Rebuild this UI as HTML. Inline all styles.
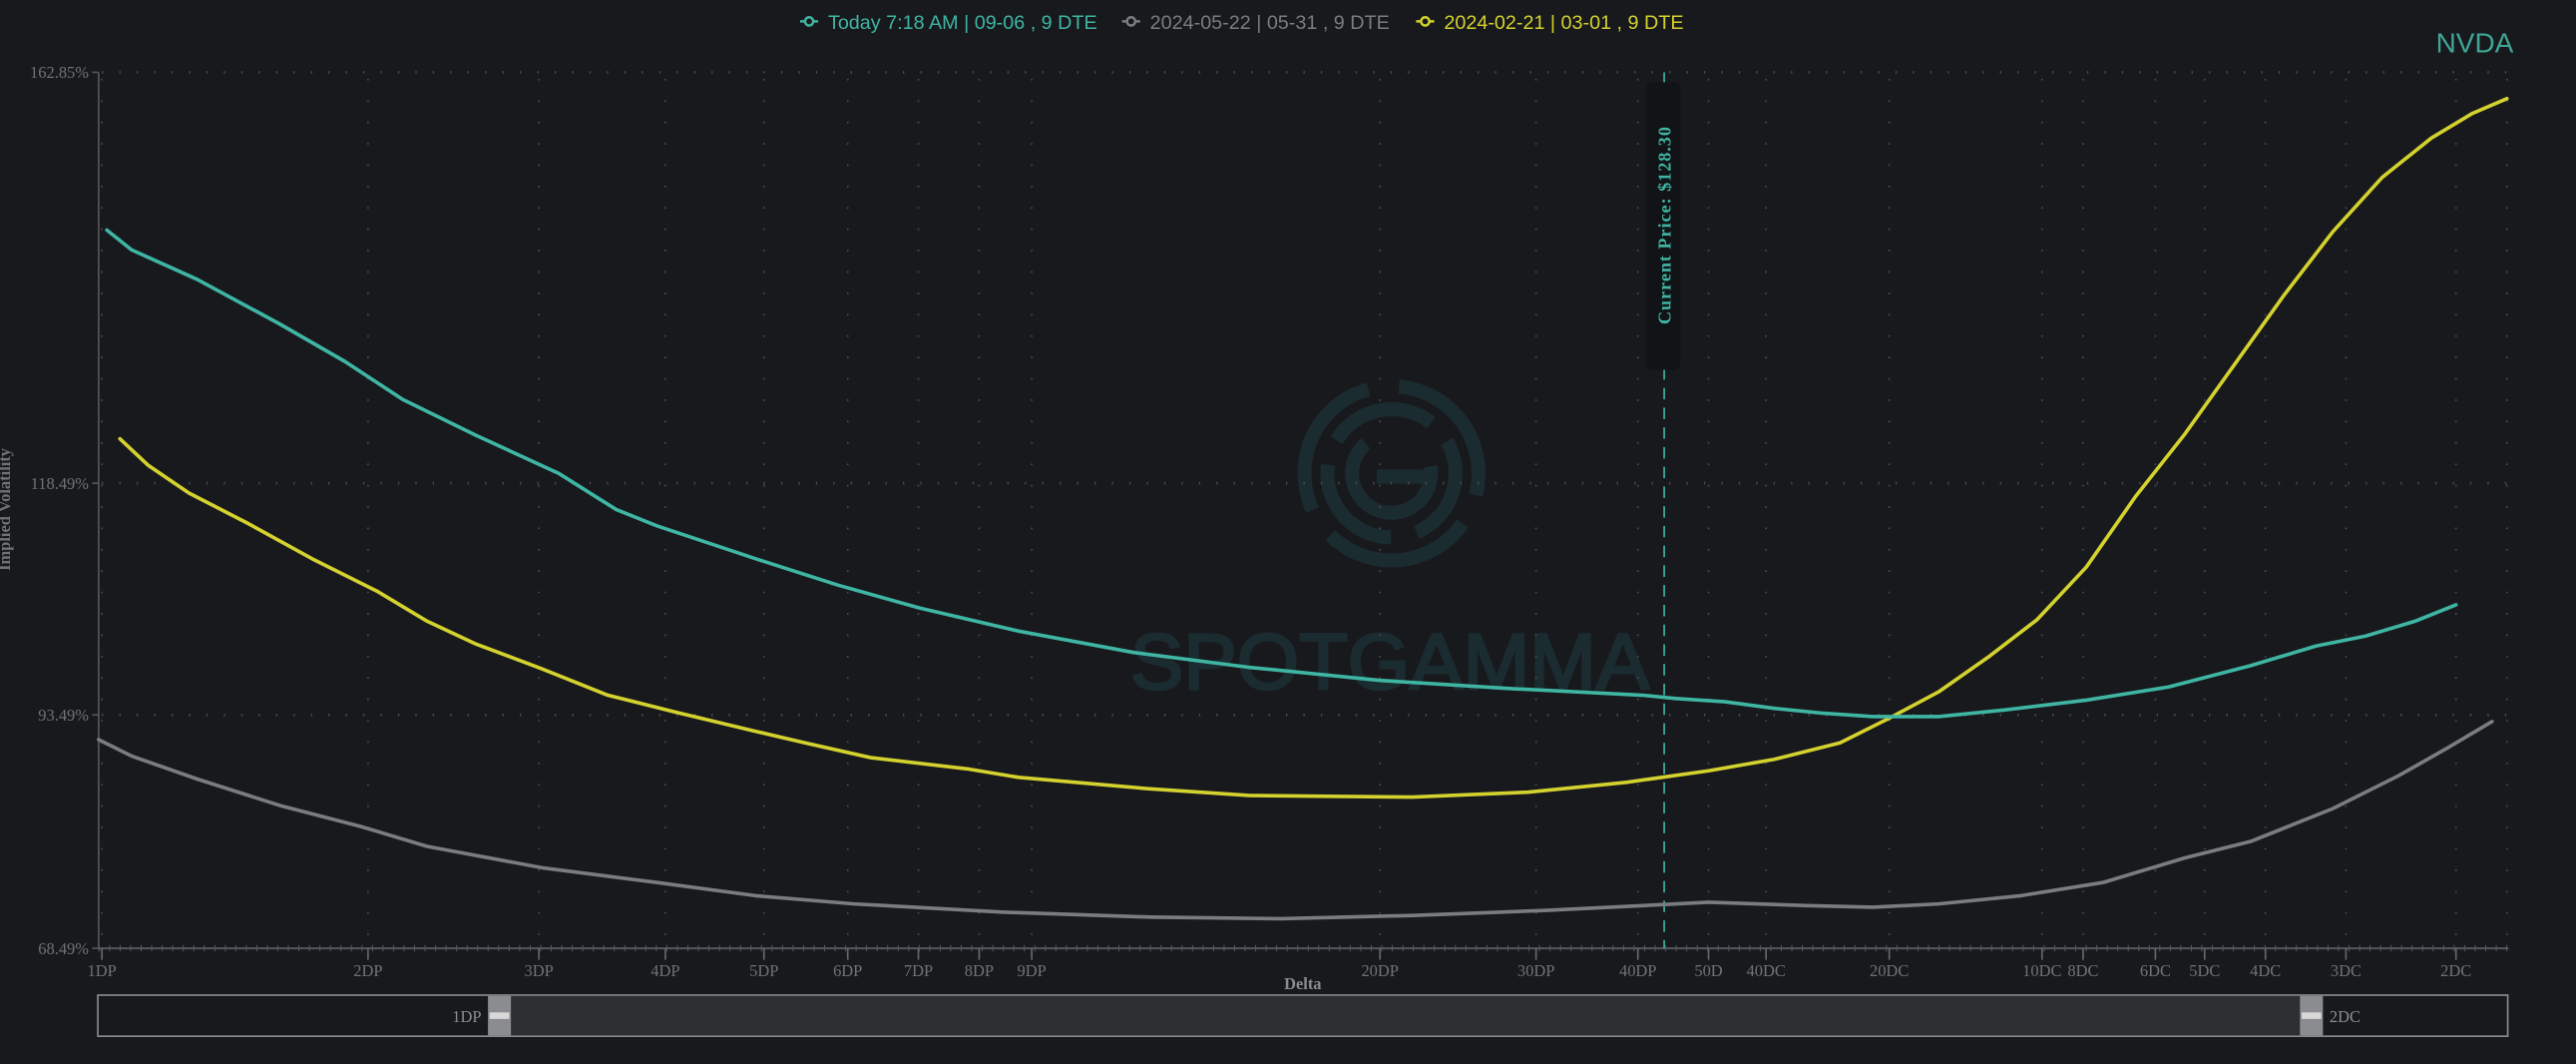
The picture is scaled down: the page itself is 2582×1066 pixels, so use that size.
<!DOCTYPE html>
<html><head><meta charset="utf-8"><style>
html,body{margin:0;padding:0;background:#18191d;overflow:hidden}
svg{display:block}
</style></head><body>
<svg width="2582" height="1066" viewBox="0 0 1568 647.4" xmlns="http://www.w3.org/2000/svg">
<rect x="0" y="0" width="1568" height="647.4" fill="#18191d"/>

<!-- watermark logo -->
<g fill="none" stroke="#1b2c30" stroke-width="8.5">
  <circle cx="847" cy="288" r="53" stroke-dasharray="92 19" transform="rotate(-85 847 288)"/>
  <circle cx="847" cy="288" r="39" stroke-dasharray="66 16" transform="rotate(-30 847 288)"/>
  <circle cx="847" cy="288" r="24" stroke-dasharray="100 51" transform="rotate(-10 847 288)"/>
  <line x1="838" y1="290" x2="872" y2="290"/>
</g>
<text x="688" y="419" font-family="Liberation Sans, sans-serif" font-size="48" fill="#1b2c30" stroke="#1b2c30" stroke-width="1.6" textLength="316" lengthAdjust="spacingAndGlyphs">SPOTGAMMA</text>

<!-- vertical dotted grid -->
<g stroke="#4a4c52" stroke-width="1" stroke-dasharray="1 12">
  <line x1="62" y1="48" x2="62" y2="575"/>
  <line x1="224" y1="48" x2="224" y2="575"/>
  <line x1="328" y1="48" x2="328" y2="575"/>
  <line x1="405" y1="48" x2="405" y2="575"/>
  <line x1="465" y1="48" x2="465" y2="575"/>
  <line x1="516" y1="48" x2="516" y2="575"/>
  <line x1="559" y1="48" x2="559" y2="575"/>
  <line x1="596" y1="48" x2="596" y2="575"/>
  <line x1="628" y1="48" x2="628" y2="575"/>
  <line x1="840" y1="48" x2="840" y2="575"/>
  <line x1="935" y1="48" x2="935" y2="575"/>
  <line x1="997" y1="48" x2="997" y2="575"/>
  <line x1="1040" y1="48" x2="1040" y2="575"/>
  <line x1="1075" y1="48" x2="1075" y2="575"/>
  <line x1="1150" y1="48" x2="1150" y2="575"/>
  <line x1="1243" y1="48" x2="1243" y2="575"/>
  <line x1="1268" y1="48" x2="1268" y2="575"/>
  <line x1="1312" y1="48" x2="1312" y2="575"/>
  <line x1="1342" y1="48" x2="1342" y2="575"/>
  <line x1="1379" y1="48" x2="1379" y2="575"/>
  <line x1="1428" y1="48" x2="1428" y2="575"/>
  <line x1="1495" y1="48" x2="1495" y2="575"/>
  <line x1="1526" y1="48" x2="1526" y2="575"/>
</g>
<!-- horizontal dotted grid -->
<g stroke="#4a4c52" stroke-width="1.6" stroke-dasharray="0.8 9.8">
  <line x1="62" y1="44" x2="1527" y2="44"/>
  <line x1="62" y1="294" x2="1527" y2="294"/>
  <line x1="62" y1="435" x2="1527" y2="435"/>
</g>

<!-- axes -->
<line x1="60" y1="44" x2="60" y2="578" stroke="#55575c" stroke-width="1"/>
<line x1="60" y1="577" x2="1527" y2="577" stroke="#55575c" stroke-width="1.2"/>
<line x1="60" y1="577" x2="1527" y2="577" stroke="#55575c" stroke-width="4" stroke-dasharray="0.6 5.8"/>
<g stroke="#55575c" stroke-width="1">
  <line x1="56" y1="44" x2="60" y2="44"/><line x1="56" y1="294" x2="60" y2="294"/>
  <line x1="56" y1="435" x2="60" y2="435"/><line x1="56" y1="577" x2="60" y2="577"/>
</g>
<g stroke="#66686d" stroke-width="1">
  <line x1="62" y1="577" x2="62" y2="584"/><line x1="224" y1="577" x2="224" y2="584"/>
  <line x1="328" y1="577" x2="328" y2="584"/><line x1="405" y1="577" x2="405" y2="584"/>
  <line x1="465" y1="577" x2="465" y2="584"/><line x1="516" y1="577" x2="516" y2="584"/>
  <line x1="559" y1="577" x2="559" y2="584"/><line x1="596" y1="577" x2="596" y2="584"/>
  <line x1="628" y1="577" x2="628" y2="584"/><line x1="840" y1="577" x2="840" y2="584"/>
  <line x1="935" y1="577" x2="935" y2="584"/><line x1="997" y1="577" x2="997" y2="584"/>
  <line x1="1040" y1="577" x2="1040" y2="584"/><line x1="1075" y1="577" x2="1075" y2="584"/>
  <line x1="1150" y1="577" x2="1150" y2="584"/><line x1="1243" y1="577" x2="1243" y2="584"/>
  <line x1="1268" y1="577" x2="1268" y2="584"/><line x1="1312" y1="577" x2="1312" y2="584"/>
  <line x1="1342" y1="577" x2="1342" y2="584"/><line x1="1379" y1="577" x2="1379" y2="584"/>
  <line x1="1428" y1="577" x2="1428" y2="584"/><line x1="1495" y1="577" x2="1495" y2="584"/>
</g>

<!-- y labels -->
<g font-family="Liberation Serif, serif" font-size="10" fill="#707276" text-anchor="end">
  <text x="54" y="47.5">162.85%</text>
  <text x="54" y="297.5">118.49%</text>
  <text x="54" y="438.5">93.49%</text>
  <text x="54" y="580.5">68.49%</text>
</g>
<text transform="translate(6 310) rotate(-90)" font-family="Liberation Serif, serif" font-size="10" font-weight="bold" fill="#707276" text-anchor="middle">Implied Volatility</text>

<!-- x labels -->
<g font-family="Liberation Serif, serif" font-size="10" fill="#707276" text-anchor="middle">
  <text x="62" y="594">1DP</text><text x="224" y="594">2DP</text><text x="328" y="594">3DP</text>
  <text x="405" y="594">4DP</text><text x="465" y="594">5DP</text><text x="516" y="594">6DP</text>
  <text x="559" y="594">7DP</text><text x="596" y="594">8DP</text><text x="628" y="594">9DP</text>
  <text x="840" y="594">20DP</text><text x="935" y="594">30DP</text><text x="997" y="594">40DP</text>
  <text x="1040" y="594">50D</text><text x="1075" y="594">40DC</text><text x="1150" y="594">20DC</text>
  <text x="1243" y="594">10DC</text><text x="1268" y="594">8DC</text><text x="1312" y="594">6DC</text>
  <text x="1342" y="594">5DC</text><text x="1379" y="594">4DC</text><text x="1428" y="594">3DC</text>
  <text x="1495" y="594">2DC</text>
  <text x="793" y="602" font-weight="bold" fill="#8a8c90">Delta</text>
</g>

<!-- current price -->
<line x1="1013" y1="44" x2="1013" y2="577" stroke="#3fb5a3" stroke-width="1" stroke-dasharray="7 5"/>
<rect x="1002" y="50" width="21" height="175" rx="4" fill="#121316"/>
<text transform="translate(1017 137) rotate(-90)" font-family="Liberation Serif, serif" font-size="11" font-weight="bold" fill="#3fb5a3" text-anchor="middle" letter-spacing="0.6">Current Price: $128.30</text>

<!-- curves -->
<g fill="none" stroke-width="2.2" stroke-linejoin="round" stroke-linecap="round">
<polyline stroke="#7b7c80" points="60,450 80,460 120,474 170,490 220,503 260,515 330,528 400,537 460,545 520,550 610,555 700,558 780,559 860,557 940,554 1000,551 1040,549 1100,551 1140,552 1180,550 1230,545 1280,537 1330,522 1370,512 1420,492 1460,472 1490,455 1517,439"/>
<polyline stroke="#d4d22e" points="73,267 90,283 115,300 150,318 190,340 230,360 260,378 290,392 330,407 370,423 410,433 460,445 490,452 530,461 590,468 620,473 700,480 760,484 860,485 930,482 990,476 1040,469 1080,462 1120,452 1150,437 1180,421 1210,400 1240,377 1270,345 1300,302 1330,264 1360,222 1390,180 1420,141 1450,108 1480,84 1505,69 1526,60"/>
<polyline stroke="#3fb5a3" points="65,140 80,152 120,170 170,197 210,220 245,243 290,265 340,288 375,310 400,320 460,340 510,356 560,370 620,384 690,397 760,406 840,414 920,419 1000,423 1020,425 1050,427 1080,431 1110,434 1140,436 1180,436 1220,432 1270,426 1320,418 1370,405 1410,393 1440,387 1470,378 1495,368"/>
</g>

<!-- legend -->
<g font-family="Liberation Sans Narrow, Liberation Sans, sans-serif" font-size="12">
  <line x1="487" y1="13" x2="498" y2="13" stroke="#3fb5a3" stroke-width="1.5"/><circle cx="492.5" cy="13" r="2.5" fill="#18191d" stroke="#3fb5a3" stroke-width="1.5"/>
  <text x="504" y="17.5" fill="#3fb5a3">Today 7:18 AM | 09-06 , 9 DTE</text>
  <line x1="683" y1="13" x2="694" y2="13" stroke="#7b7c80" stroke-width="1.5"/><circle cx="688.5" cy="13" r="2.5" fill="#18191d" stroke="#7b7c80" stroke-width="1.5"/>
  <text x="700" y="17.5" fill="#7b7c80">2024-05-22 | 05-31 , 9 DTE</text>
  <line x1="862" y1="13" x2="873" y2="13" stroke="#d4d22e" stroke-width="1.5"/><circle cx="867.5" cy="13" r="2.5" fill="#18191d" stroke="#d4d22e" stroke-width="1.5"/>
  <text x="879" y="17.5" fill="#d4d22e">2024-02-21 | 03-01 , 9 DTE</text>
</g>
<text x="1530" y="32" font-family="Liberation Sans, sans-serif" font-size="17" fill="#3fa595" text-anchor="end">NVDA</text>

<!-- navigator -->
<rect x="59.5" y="605.5" width="1467" height="25" fill="#18191d" stroke="#8a8c90" stroke-width="1"/>
<rect x="311" y="606" width="1089" height="24" fill="#2e2f33"/>
<rect x="297" y="606" width="14" height="24" fill="#8a8c90"/>
<rect x="298" y="616" width="12" height="4" fill="#d8d8d8"/>
<rect x="1400" y="606" width="14" height="24" fill="#8a8c90"/>
<rect x="1401" y="616" width="12" height="4" fill="#d8d8d8"/>
<g font-family="Liberation Serif, serif" font-size="10" fill="#8a8c90">
  <text x="293" y="622" text-anchor="end">1DP</text>
  <text x="1418" y="622">2DC</text>
</g>
</svg>
</body></html>
